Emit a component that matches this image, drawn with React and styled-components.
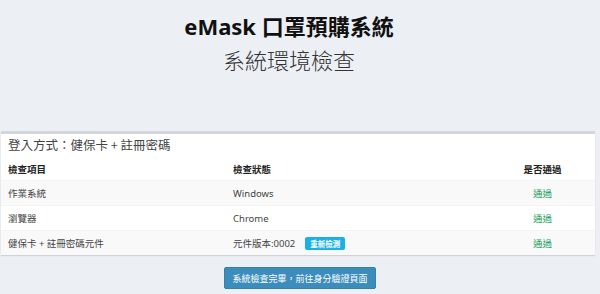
import React from 'react';
import styled, { createGlobalStyle } from 'styled-components';

const GlobalStyle = createGlobalStyle`
  html, body { margin:0; padding:0; background:#ecf0f5; }
  body { font-family:"Noto Sans","Noto Sans CJK TC",sans-serif; color:#333; }
`;

const Page = styled.div`
  width:600px; height:294px; overflow:hidden; background:#ecf0f5;
  display:flex; flex-direction:column; align-items:center;
`;
const Header = styled.header`
  display:flex; flex-direction:column; align-items:center; padding-right:22px;
`;
const Title = styled.h1`
  margin:11px 0 0; font-size:22px; line-height:30px; font-weight:700; color:#111;
  font-family:"Noto Sans","Noto Sans CJK TC",sans-serif;
`;
const SubTitle = styled.h2`
  margin:3px 0 0; font-size:22px; line-height:30px; font-weight:300; color:#333;
  font-family:"Noto Sans CJK TC",sans-serif;
`;
const Card = styled.section`
  margin:57px 0 0 1px; align-self:flex-start; width:594px; background:#fff;
  border-top:3px solid #d2d6de; box-shadow:0 1px 1px rgba(0,0,0,0.12);
`;
const CardHeader = styled.div`
  padding:1px 7px 0; height:22px; line-height:20px; font-size:12.5px; color:#444;
  font-family:"Noto Sans CJK TC",sans-serif;
`;
const Row = styled.div`
  display:grid; grid-template-columns:225px 264px 1fr; align-items:center;
  height:${p=>p.head?'23px':'24px'};
  background:${p=>p.striped?'#f9f9f9':'#fff'};
  border-top:${p=>p.head?'none':'1px solid #f4f4f4'};
  font-size:9.5px; font-weight:${p=>p.head?600:400};
  color:${p=>p.head?'#222':'#444'};
`;
const Cell = styled.div`
  padding:0 7px; display:flex; align-items:center; gap:10px;
  justify-content:${p=>p.center?'center':'flex-start'};
  font-family:"Noto Sans","Noto Sans CJK TC",sans-serif;
`;
const Pass = styled.span`
  color:#16a05a; font-family:"Noto Sans CJK TC",sans-serif;
`;
const Badge = styled.span`
  display:inline-block; background:#1ab0e6; color:#fff; font-size:7.5px; font-weight:700;
  padding:0 5px; line-height:13px; border-radius:2px;
  font-family:"Noto Sans CJK TC",sans-serif;
`;
const Footer = styled.div`
  margin-top:12px; display:flex; justify-content:center;
`;
const Button = styled.button`
  height:22px; padding:0 7px; background:#3c8dbc; border:1px solid #367fa9; border-radius:2px;
  color:#fff; font-size:9px; font-family:"Noto Sans CJK TC",sans-serif; cursor:pointer;
`;

const rows = [
  { item:'作業系統', status:'Windows' },
  { item:'瀏覽器', status:'Chrome' },
  { item:'健保卡 + 註冊密碼元件', status:'元件版本:0002', retry:true },
];

export default function App(){
  return (
    <Page>
      <GlobalStyle />
      <Header>
        <Title>eMask 口罩預購系統</Title>
        <SubTitle>系統環境檢查</SubTitle>
      </Header>
      <Card>
        <CardHeader>登入方式：健保卡 + 註冊密碼</CardHeader>
        <Row head>
          <Cell>檢查項目</Cell>
          <Cell>檢查狀態</Cell>
          <Cell center>是否通過</Cell>
        </Row>
        {rows.map((r,i)=>(
          <Row key={r.item} striped={i%2===0}>
            <Cell>{r.item}</Cell>
            <Cell>{r.status}{r.retry && <Badge>重新檢測</Badge>}</Cell>
            <Cell center><Pass>通過</Pass></Cell>
          </Row>
        ))}
      </Card>
      <Footer>
        <Button>系統檢查完畢，前往身分驗證頁面</Button>
      </Footer>
    </Page>
  );
}
